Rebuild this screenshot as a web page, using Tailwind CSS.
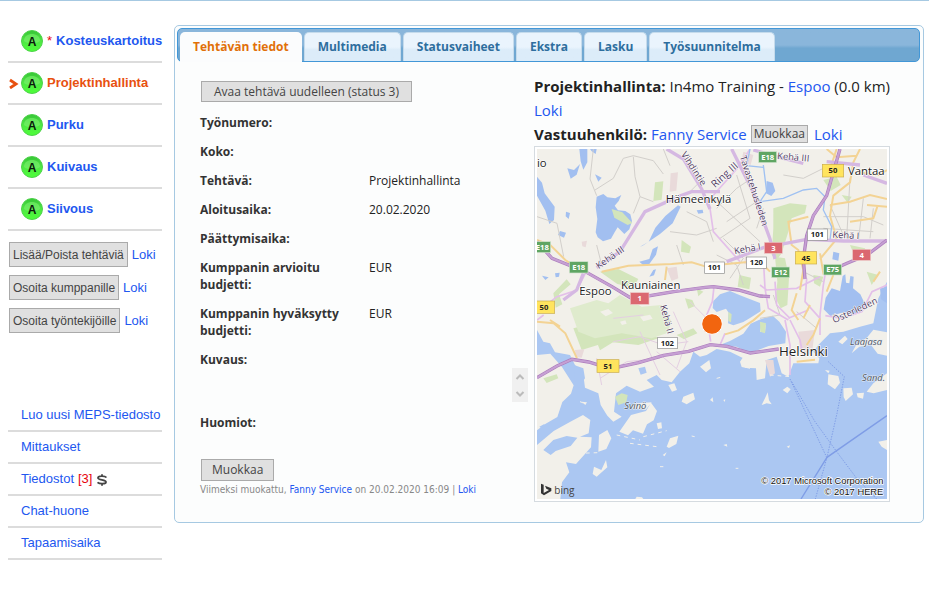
<!DOCTYPE html>
<html lang="fi">
<head>
  <meta charset="UTF-8">
  <meta name="viewport" content="width=device-width, initial-scale=1">
  <title>Projektinhallinta</title>
  <script src="https://cdn.jsdelivr.net/npm/@tailwindcss/browser@4"></script>
</head>
<body class="bg-white border-t border-[#a6c9e2] font-['Liberation_Sans',Arial,sans-serif] text-[13px] text-[#222]">
  <svg class="absolute size-0">
    <defs>
      <linearGradient id="ball" x1="0" y1="0" x2="0" y2="1">
        <stop offset="0" stop-color="#35c435"/>
        <stop offset="0.45" stop-color="#4fe545"/>
        <stop offset="1" stop-color="#4dff38"/>
      </linearGradient>
      <symbol id="badge" viewBox="0 0 22 22">
        <circle cx="11" cy="11" r="10.5" fill="url(#ball)" stroke="#4ed24a"/>
        <path d="M3 11C3 6 7 4 11 4s8 2 8 7c-3 3-13 3-16 0z" fill="#7df070" opacity=".6"/>
        <text x="11" y="15.500" text-anchor="middle" font-family="Liberation Sans" font-weight="bold" font-size="12" fill="#0a1a0a">A</text>
      </symbol>
    </defs>
  </svg>

  <div class="flex items-start gap-3 pl-2 pr-[5px] pt-5">
    <aside class="w-[154px] shrink-0">
      <ul class="font-bold text-[#2257f0]">
        <li class="flex h-[42px] items-center gap-1 border-b-2 border-[#dcdcdc] pl-[13px] pb-px whitespace-nowrap">
          <svg class="size-[22px] shrink-0"><use href="#badge"/></svg>
          <span class="font-normal text-red-600">*</span><a href="#">Kosteuskartoitus</a>
        </li>
        <li class="flex h-[42px] items-center border-b-2 border-[#dcdcdc] pl-px pb-px text-[#e8500f]">
          <svg class="mr-[2px] w-[10px] h-3" viewBox="0 0 10 12"><path d="M1 3l6 4-6 4" fill="none" stroke="#e8500f" stroke-width="2.800"/></svg>
          <svg class="mr-1 size-[22px]"><use href="#badge"/></svg><a href="#">Projektinhallinta</a>
        </li>
        <li class="flex h-[42px] items-center gap-1 border-b-2 border-[#dcdcdc] pl-[13px] pb-px">
          <svg class="size-[22px]"><use href="#badge"/></svg><a href="#">Purku</a>
        </li>
        <li class="flex h-[42px] items-center gap-1 border-b-2 border-[#dcdcdc] pl-[13px] pb-px">
          <svg class="size-[22px]"><use href="#badge"/></svg><a href="#">Kuivaus</a>
        </li>
        <li class="flex h-[42px] items-center gap-1 border-b-2 border-[#dcdcdc] pl-[13px] pb-px">
          <svg class="size-[22px]"><use href="#badge"/></svg><a href="#">Siivous</a>
        </li>
      </ul>

      <div class="mt-[11px] ml-px flex flex-col gap-2 text-xs whitespace-nowrap">
        <div class="flex items-center gap-1">
          <button class="h-[25px] border border-[#aaa] bg-[#e0e0e0] px-[3px] text-[#444]">Lisää/Poista tehtäviä</button>
          <a href="#" class="text-[13px] text-[#2257f0]">Loki</a>
        </div>
        <div class="flex items-center gap-1">
          <button class="h-[25px] border border-[#aaa] bg-[#e0e0e0] px-[3px] text-[#444]">Osoita kumppanille</button>
          <a href="#" class="text-[13px] text-[#2257f0]">Loki</a>
        </div>
        <div class="flex items-center gap-1">
          <button class="h-[25px] border border-[#aaa] bg-[#e0e0e0] px-[3px] text-[#444]">Osoita työntekijöille</button>
          <a href="#" class="text-[13px] text-[#2257f0]">Loki</a>
        </div>
      </div>

      <ul class="mt-[67px] whitespace-nowrap text-[#2257f0]">
        <li class="flex h-8 items-center border-b-2 border-[#dcdcdc] pl-[13px]"><a href="#">Luo uusi MEPS-tiedosto</a></li>
        <li class="flex h-8 items-center border-b-2 border-[#dcdcdc] pl-[13px]"><a href="#">Mittaukset</a></li>
        <li class="flex h-8 items-center gap-1 border-b-2 border-[#dcdcdc] pl-[13px]">
          <a href="#">Tiedostot</a><span class="text-red-600">[3]</span>
          <svg class="mt-[2px] w-3 h-3" viewBox="0 0 12 12" fill="none" stroke="#444" stroke-width="1.800"><path d="M10.500 3.500C9 1.800 2 1.500 2 3.900c0 2.200 8 1.600 8 4 0 2.300-6.500 2.300-8.500.4M6 .3v2M6 9.700v2"/></svg>
        </li>
        <li class="flex h-8 items-center border-b-2 border-[#dcdcdc] pl-[13px]"><a href="#">Chat-huone</a></li>
        <li class="flex h-8 items-center border-b-2 border-[#dcdcdc] pl-[13px]"><a href="#">Tapaamisaika</a></li>
      </ul>
    </aside>

    <main class="mt-1 min-w-0 grow rounded-[5px] border border-[#a6c9e2] bg-[#fcfdfd] p-[2px] pr-[3px] pb-5 font-['Open_Sans','Noto_Sans',sans-serif]">
      <nav class="flex h-[34px] items-end gap-[2px] rounded-[5px] border border-[#4297d7] bg-linear-to-b from-[#8ab6db] from-50% to-[#6fa7d1] to-60% pl-[2px] text-[12px] font-bold text-[#2e6e9e] whitespace-nowrap">
        <a href="#" class="-mb-px flex h-[30px] items-center rounded-t-[5px] bg-[#fbfcfd] px-[13px] text-[#e17009]">Tehtävän tiedot</a>
        <a href="#" class="flex h-[29px] items-center rounded-t-[5px] border border-b-0 border-[#c5dbec] bg-linear-to-b from-[#eaf4fd] from-50% to-[#dcecf9] to-60% px-[13px]">Multimedia</a>
        <a href="#" class="flex h-[29px] items-center rounded-t-[5px] border border-b-0 border-[#c5dbec] bg-linear-to-b from-[#eaf4fd] from-50% to-[#dcecf9] to-60% px-[13px]">Statusvaiheet</a>
        <a href="#" class="flex h-[29px] items-center rounded-t-[5px] border border-b-0 border-[#c5dbec] bg-linear-to-b from-[#eaf4fd] from-50% to-[#dcecf9] to-60% px-[13px]">Ekstra</a>
        <a href="#" class="flex h-[29px] items-center rounded-t-[5px] border border-b-0 border-[#c5dbec] bg-linear-to-b from-[#eaf4fd] from-50% to-[#dcecf9] to-60% px-[13px]">Lasku</a>
        <a href="#" class="flex h-[29px] items-center rounded-t-[5px] border border-b-0 border-[#c5dbec] bg-linear-to-b from-[#eaf4fd] from-50% to-[#dcecf9] to-60% px-[13px]">Työsuunnitelma</a>
      </nav>

      <div class="flex pl-[23px] pr-[29px] pt-3">
        <section class="w-[334px] shrink-0 pt-[7px] text-[12px] leading-[17px]">
          <button class="ml-px h-[21px] border border-[#aaa] bg-[#e0e0e0] px-[12px] leading-[19px] text-[#444]">Avaa tehtävä uudelleen (status 3)</button>
          <dl class="mt-3 grid grid-cols-[161px_1fr] gap-x-2 gap-y-3 [&>dt]:font-bold [&>dt]:text-[#333]">
            <dt>Työnumero:</dt><dd></dd>
            <dt>Koko:</dt><dd></dd>
            <dt>Tehtävä:</dt><dd>Projektinhallinta</dd>
            <dt>Aloitusaika:</dt><dd>20.02.2020</dd>
            <dt>Päättymisaika:</dt><dd></dd>
            <dt>Kumppanin arvioitu budjetti:</dt><dd>EUR</dd>
            <dt>Kumppanin hyväksytty budjetti:</dt><dd>EUR</dd>
            <dt>Kuvaus:</dt>
            <dd class="flex h-[51px] items-end justify-end pr-[6px]">
              <svg class="h-[34px] w-4 bg-[#f0f0f0]" viewBox="0 0 16 34" fill="none" stroke="#bbb" stroke-width="2"><path d="M4.500 11L8 7.500l3.500 3.500M4.500 24L8 27.500l3.500-3.500"/></svg>
            </dd>
            <dt>Huomiot:</dt><dd></dd>
          </dl>
          <button class="mt-7 ml-px h-[22px] border border-[#aaa] bg-[#e0e0e0] px-[10px] leading-5 text-[#444]">Muokkaa</button>
          <p class="whitespace-nowrap font-['DejaVu_Sans_Condensed','DejaVu_Sans',sans-serif] text-[10px] text-[#888]">Viimeksi muokattu, <a href="#" class="text-[#2257f0]">Fanny Service</a> on 20.02.2020 16:09 | <a href="#" class="text-[#2257f0]">Loki</a></p>
        </section>

        <section class="min-w-0 grow text-[15px] leading-6">
          <p class="whitespace-nowrap"><b>Projektinhallinta:</b> In4mo Training - <a href="#" class="text-[#2257f0]">Espoo</a> (0.0 km)</p>
          <p><a href="#" class="text-[#2257f0]">Loki</a></p>
          <p class="flex items-center gap-1 whitespace-nowrap"><b>Vastuuhenkilö:</b> <a href="#" class="text-[#2257f0]">Fanny Service</a>
            <button class="mr-[2px] h-[18px] border border-[#aaa] bg-[#e0e0e0] px-[2px] text-xs leading-4 text-[#444]">Muokkaa</button>
            <a href="#" class="text-[#2257f0]">Loki</a></p>

          <div class="w-[356px] border border-[#d5dbe0] bg-white p-[2px]">
            <svg class="block w-full" viewBox="21 12 1050 1050" font-family="Open Sans, Noto Sans, sans-serif">
              <rect x="21" y="12" width="1050" height="1050" fill="#abc7f2"/>
              <!-- mainland -->
              <path fill="#f2f0ea" d="M21 12H1071V410L1045 460 1030 535 990 545 940 560 900 565 865 600 850 620 868 640 865 655 790 655 775 695 755 685 740 635 710 645 705 700 680 705 678 670 645 668 640 640 600 620 560 612 530 630 510 635 490 620 478 655 450 680 425 712 395 705 380 690 350 705 372 725 330 740 290 722 258 745 252 800 275 815 250 830 232 812 212 780 205 745 165 728 160 690 135 660 120 630 75 622 60 595 40 590 21 555z"/>
              <path fill="#f2f0ea" d="M21 630l40-4 35 40 35 55-8 25-26 25-15 45-35 20-26 20zM21 900l50-42 50-28 38-20 22 15-5 40-26 10 35 2-2 30-45 50-30-5 10 30-22 30-5 50H21z"/>
              <path fill="#abc7f2" d="M40 915l30-30 40-12 32 5-20 25-45 15-15 12zM28 845l15-8 3 7-12 6zM325 670l20-5 5 18-18 6zM132 660l28 10 5 30-20 30-12-30z"/>
              <path fill="#abc7f2" d="M550 468l20-20 30-10 28 12 25 10 37 14 2 25-32 20-20 12-30 10-16-6 2-32-8-12-28 10-12-12zM575 598l25-10 40-22 22-30 26-12 40-12 20 18 20 30-2 35-50 8-56 22-40-20-30-2z"/>
              <path fill="#f2f0ea" d="M695 535l12 5-2 22-15-2z"/>
              <!-- lakes -->
              <g fill="#a2bff0">
                <path d="M200 155l20-8 12 10 24 3 18-10-8 18-12 14 10 14 22 2 15 10 5 20-8 25-15 14-20-20-10 16-10 18-24 8-16-12-6-15 5-40-5-35zM21 95l15 18 8 32 30 40-2 40-14 12-12-40-25-45zM148 12h24v40l-12 22-8-25zM180 12h20l-3 15-12-8zM112 70l20 5 18-18-10 32-18 12zM195 88l20 10-10 12zM90 258l18 5-6 15-18-8zM108 200l12 4-4 18-9-8zM36 392l20 5-10 8zM75 385l14-2-2 12-10 2zM330 305l26-15 20-42 30-35 38-32 8 4-24 50-38 32-22 15-30 20zM328 350l30-8 10-30 16-8-6 25-20 28-15 6zM500 196l18-2 2 10-15 2zM370 375l8-2-6 18-14 4zM710 108l18 5 8 25-12 15-16-8z"/>
                <path d="M910 320l18 5-3 22-18-4zM905 430l25 8 8-45 8-5 2 25 10 2 3-22 10 2-2 35 22 18 12 25-2 15-30 20-35-5-35 10-20-20 6-35zM1050 430l21-5v50l-18-12z"/>
              </g>
              <!-- parks -->
              <g fill="#d3e5bb">
                <path d="M375 112l25-3-5 55-25 4zM245 192l32 10 30 32-14 6-40-22zM210 380l55-8 60 30-15 25-48-10zM455 285l28 20-5 20-25-5zM465 460l22 5 8 18-20 8zM70 445l40-42 12 15-35 30 10 30-20 10zM500 430l20 10-15 14zM255 755l20-10 18 5-4 22-24 8zM130 550l60-15 70 30 90-10 35 25-60 20-90-10-80 25zM200 590l40-22 15 20-45 28zM440 570l50-20 12 15-40 18zM40 700l40-12 5 12-35 14z"/>
                <path d="M730 190l50-15 50 5-5 25-40 15-10 40-20 65-15 20-15-15 5-80zM735 335l30 5 12 60-5 80-20 10-15-30 5-50zM628 390l35 8-5 35-35-8zM880 105l40-10 12 25-30 18zM850 390l30 5-10 30-18-10zM960 300l45 10 5 35-38-15zM690 530l18 5-3 30-14-5zM935 150l30 5-12 18zM1010 380l35 10-20 30zM595 500l10 8-2 24-8-4z"/>
              </g>
              <path fill="#dfebcd" d="M120 490l80-25 35 10 35-25 65 35 60-5 30 50-15 35-45 15-90-15-80 15-50-20z"/>
              <g fill="#f2f0ea"><path d="M210 500l25-8 14 12-22 10zM330 515l30-6 8 12-28 8zM270 530l16-4 4 10-14 4z"/></g>
              <g fill="#e9dada"><path d="M422 85l22-3-5 55-20 3zM155 290l16-3-4 20-10-3zM410 370l30-5 5 35-20 8zM805 560l50-5-10 75-35-10zM705 645l25 0 5 40-15 10zM640 20l30 10-8 30-28-10zM645 335l30 5-8 22-24-5zM135 615l28-2-8 25-18-2z"/></g>
              <!-- islands -->
              <g fill="#f2f0ea">
                <path d="M268 860l35-50 45-12 15-25 18 25-10 28-20 12-12 28-30-10-15 15zM205 920l2-50 25-15 12 25-15 32zM192 965l22 10 14-30 4 22-32 28-12-8zM455 770l5-15 30-12 5 20-25 15zM415 720l18-5 8 20-15 5zM410 905l10-25 25-8-6 25-22 12zM510 665l28-20 5 25-15 12zM380 835l14-3 2 18-12 2zM155 770l16 2-5 8zM320 1055l16 2 4 5h-24zM300 790l20-15 45-3-18 22zM398 930l12-8-6 12z"/>
                <path d="M695 780l10-20 8-18 4 24 8 12-15-3zM758 735l14-10 10 8-10 12zM580 765l6-2-2 8zM895 688l30 5 5 20-15 20-22-15zM940 730l25-2 4 20-22 20-6-12zM980 745l22-2-3 18-16-4zM1010 740l20-25 41-30v50l-40 10zM965 625l15-28 30-18 20-25 41 8v70l-28-6-20-26-35 5zM885 675l14 2-4 8zM1045 890l26-5v30l-16-10zM580 900l10-3 2 8zM770 905l10-4-3 8zM540 765l8-8 2 15zM630 650l15-22 20 8-5 35-25-5zM925 590l20-18 8 10-16 16z"/>
              </g>
              <g stroke="#f2f0ea" stroke-width="3" stroke-dasharray="11 12"><path d="M260 870l70 15M300 895l80 10M340 875l70-18M485 873l9 2M390 965h10M145 925l60-2M720 690l60 5M560 700l20-5M617 970h8M150 770l20 8"/></g>
              <!-- minor streets -->
              <g fill="none" stroke="#d2cfcb" stroke-width="3">
                <path d="M280 40l30-8 60 15 30 40M280 40l-30 60-55 35M310 35l5 60 15 60-20 50M190 12l-10 90 20 50M21 215l60 20 20 100M200 300l15 60M330 155l40 15M400 12l20 50"/>
                <path d="M560 190l60-60 30-20M550 160l140 130M590 230l90-60M620 90l40 130-90 60M700 190l-20 60M880 215h120l60 25M900 180l40 90M960 100l-10 180M1000 160l-15 130M880 250l150 10M1030 190l-10 90M760 90l60 10 60-30M470 200l60 30 20 60M520 100l-40 40"/>
                <path d="M420 260l80 10 60-20M440 300l20 60M560 330l60 30 20 60M580 280l60 60-40 60M730 450l20 60-60 10M820 380l60 30M800 500l60 50"/>
              </g>
              <g fill="none" stroke="#e4cfe2" stroke-width="3"><path d="M250 590l80-15 70 25 75-10M330 560l60 130M430 500l40 90-30 80M480 470l50 50M210 700l80-50 100-10M200 640l15 80M380 620l70 60M250 520l90-10"/></g>
              <g fill="none" stroke="#e3bfe9" stroke-width="5">
                <path d="M21 500l60-45 60-20 25-50M200 365l55-35M540 190l10 70 80 90M660 12l-40 60-80 90"/>
                <path d="M552 425l-5 45-17 40 12 80M700 340l5 90 10 60 60 35M690 420l20 15 90-5 70-35M830 400l-5 70 45 50M890 360l-10 60-10 90 0 60M570 600l15-35M1071 420l-45 20-30 60-60 20-50-8"/>
                <path d="M780 525l30 60 10 50M765 525l15 75 0 90M775 520l60-25M735 410l5 70 40 40M21 525l20-15"/>
              </g>
              <!-- secondary roads -->
              <g fill="none" stroke="#f3d394" stroke-width="6">
                <path d="M21 285l40 15 45 45 30 20M215 380l80-18 130-5 60-5 60 18M410 365l-5 40M21 530l50 5 35 30 35 75M60 525l30 20"/>
                <path d="M560 360l100-10 40 10 20 20M835 215l-60 15 10 70 20 15 15 60-10 60M900 180l60-10 60-20 51 12M990 12l-20 40-10 60-50 40-10 60 20 70-50 60M870 325l10 60 50-20M1071 185l-60-5M890 12l30 25 60-5M920 12l-20 60M1050 380l-20 30M975 80l70 10 26-15"/>
                <path d="M585 568l40-12 45-30 35-30M800 445l-15 50 20 30M840 480l-20 40M800 650l55-6M870 520l-20 50-20 30M960 230l70-10 12-35M910 390l-20 50" />
              </g>
              <g fill="none" stroke="#9fc1f2" stroke-width="4"><path d="M700 60l10 80-20 30 70-10 60-25 40-5 25 25-5 40 25 50-5 40M660 12l-10 50 50 5"/></g>
              <!-- motorways -->
              <g fill="none" stroke="#d5b8e2" stroke-width="10"><path d="M200 368l70-48 75-120 100-45 40-15h85M410 12l50 30 55 90 25 60M605 12l60 120 55 150 15 60M590 350l110-42 130-25 110 5 131 0M820 55l-80-20-70-20M890 50l100 10M1000 90l71 25M100 465l40-30 20-50"/></g>
              <g fill="none" stroke="#ae7fbe" stroke-width="10"><path id="mw" d="M21 290l45 50 100 40 80 45 60 36 130-22 90-12 24-2 75 10 65 18 30 2M21 698l60-35 45-20 50 8 65 20 85-18 75-22 75-12 65-20 50 5 70 20 85-12M930 12l-40 140-40 60-20 60-10 70 5 60M1071 285l-60 45-60 25-45 20"/></g>
              <use href="#mw" fill="none" stroke="#c6a0d3" stroke-width="5"/>
              <path fill="none" stroke="#c6a0d3" stroke-width="5" d="M21 290l45 50 100 40 80 45 60 36 130-22 90-12 24-2 75 10 65 18M21 698l60-35 45-20 50 8 65 20 85-18 75-22 75-12 65-20 50 5 70 20 85-12M930 12l-40 140-40 60-20 60"/>
              <!-- ferry lines -->
              <g fill="none" stroke="#7f9de6" stroke-width="3"><path d="M1071 812l-180 125-78 125" stroke-width="4"/><path stroke-dasharray="4 4" d="M780 702l110 235M785 710l70 120 65 90 60 80 60 62M895 650l48 45-22 110-30 132-35 125"/></g>

              <!-- road shields -->
              <g font-size="23" font-weight="bold" text-anchor="middle" stroke-width="2">
                <g fill="#5fa563" stroke="#d2e4cf"><rect x="10" y="290" width="52" height="33"/><rect x="118" y="350" width="56" height="34"/><rect x="686" y="20" width="54" height="33"/><rect x="725" y="366" width="54" height="32"/><rect x="881" y="358" width="54" height="32"/></g>
                <g fill="#db6870" stroke="#edc5c5"><rect x="301" y="443" width="56" height="35"/><rect x="703" y="292" width="54" height="33"/><rect x="968" y="313" width="54" height="33"/></g>
                <g fill="#ffe45e" stroke="#c9ac4c"><rect x="10" y="468" width="64" height="37"/><rect x="201" y="644" width="66" height="38"/><rect x="877" y="58" width="64" height="38"/><rect x="796" y="320" width="64" height="37"/></g>
                <g fill="#fff" stroke="#8c8c8c"><rect x="524" y="351" width="59" height="34"/><rect x="832" y="252" width="60" height="34"/><rect x="649" y="336" width="60" height="34"/><rect x="383" y="577" width="59" height="34"/></g>
                <g fill="#fff" stroke="none"><text x="37" y="315">E18</text><text x="146" y="375">E18</text><text x="713" y="45">E18</text><text x="752" y="390">E12</text><text x="908" y="382">E75</text><text x="329" y="469">1</text><text x="730" y="317">3</text><text x="995" y="338">4</text></g>
                <g fill="#222" stroke="none"><text x="42" y="495">50</text><text x="234" y="671">51</text><text x="909" y="85">50</text><text x="828" y="347">45</text><text x="553" y="376">101</text><text x="862" y="277">101</text><text x="679" y="361">120</text><text x="412" y="602">102</text></g>
              </g>

              <!-- place names -->
              <g fill="#222" stroke="#fff" stroke-width="4" paint-order="stroke" stroke-linejoin="round" font-size="34">
                <text x="21" y="65">io</text><text x="407" y="174">Hämeenkylä</text><text x="148" y="449">Espoo</text><text x="273" y="432">Kauniainen</text><text x="954" y="90">Vantaa</text><text x="747" y="634" font-size="40">Helsinki</text>
              </g>
              <g fill="#4e3a5e" stroke="#fff" stroke-width="3" paint-order="stroke" stroke-linejoin="round" font-size="28">
                <text transform="translate(206 373) rotate(-35)">Kehä III</text><text transform="translate(452 28) rotate(57)">Vihdintie</text><text transform="translate(390 482) rotate(75)">Kehä II</text><text transform="translate(555 130) rotate(-42)" font-size="31">Ring III</text><text transform="translate(629 35) rotate(72)" font-size="28">Tavastehusleden</text><text transform="translate(741 42) rotate(5)">Kehä III</text><text transform="translate(614 328) rotate(-10)">Kehä I</text><text transform="translate(907 278) rotate(3)">Kehä I</text><text transform="translate(913 535) rotate(-25)">Österleden</text>
              </g>
              <g fill="#4d5563" stroke="#e8edf5" stroke-width="3" paint-order="stroke" font-size="28" font-style="italic"><text x="283" y="792">Svinö</text><text x="960" y="600">Laajasa</text><text x="996" y="708">Sand.</text></g>

              <circle cx="546" cy="537" r="31" fill="#f2650f" stroke="#fff" stroke-width="3"/>
              <path fill="#333" d="M33 1016l8 3v25l16-9-8-4-4-9 19 8v8l-22 13-9-6z"/>
              <text x="73" y="1046" font-size="30" fill="#444">bing</text>
              <g font-family="Liberation Sans" font-size="28" text-anchor="end" fill="#111" stroke="#fff" stroke-width="4" paint-order="stroke"><text x="1060" y="1016">© 2017 Microsoft Corporation</text><text x="1060" y="1049">© 2017 HERE</text></g>
            </svg>
          </div>
        </section>
      </div>
    </main>
  </div>
</body>
</html>
